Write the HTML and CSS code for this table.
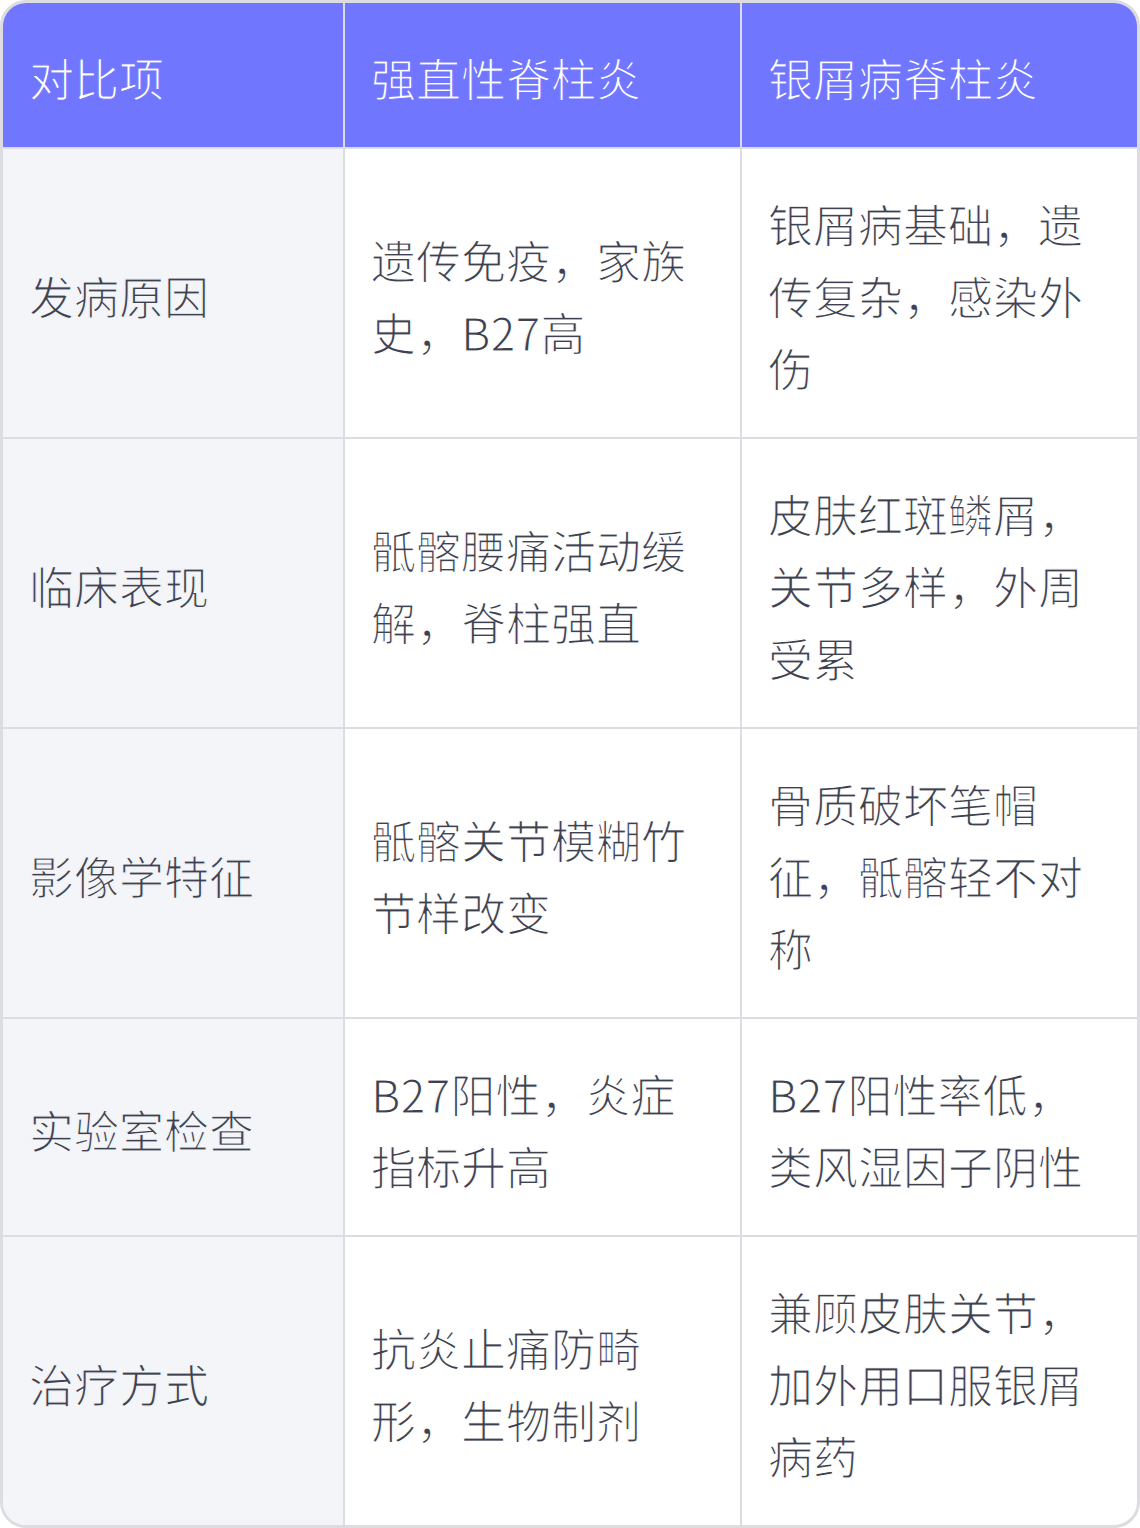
FILE: index.html
```html
<!DOCTYPE html>
<html lang="zh-CN">
<head>
<meta charset="utf-8">
<title>强直性脊柱炎与银屑病脊柱炎对比</title>
<link rel="stylesheet" href="styles.css">
</head>
<body>
<div class="card">
  <table class="cmp">
    <colgroup>
      <col class="c1">
      <col class="c2">
      <col class="c3">
    </colgroup>
    <thead>
      <tr>
        <th>对比项</th>
        <th>强直性脊柱炎</th>
        <th>银屑病脊柱炎</th>
      </tr>
    </thead>
    <tbody>
      <tr>
        <td class="label">发病原因</td>
        <td>遗传免疫，家族史，B27高</td>
        <td>银屑病基础，遗传复杂，感染外伤</td>
      </tr>
      <tr>
        <td class="label">临床表现</td>
        <td>骶髂腰痛活动缓解，脊柱强直</td>
        <td>皮肤红斑鳞屑，关节多样，外周受累</td>
      </tr>
      <tr>
        <td class="label">影像学特征</td>
        <td>骶髂关节模糊竹节样改变</td>
        <td>骨质破坏笔帽征，骶髂轻不对称</td>
      </tr>
      <tr>
        <td class="label">实验室检查</td>
        <td>B27阳性，炎症指标升高</td>
        <td>B27阳性率低，类风湿因子阴性</td>
      </tr>
      <tr>
        <td class="label">治疗方式</td>
        <td>抗炎止痛防畸形，生物制剂</td>
        <td>兼顾皮肤关节，加外用口服银屑病药</td>
      </tr>
    </tbody>
  </table>
</div>
</body>
</html>
```

FILE: styles.css
```css
html, body {
  margin: 0;
  padding: 0;
  background: #ffffff;
}

.card {
  width: 1140px;
  height: 1528px;
  box-sizing: border-box;
  border: 3px solid #dcdce1;
  border-radius: 26px;
  overflow: hidden;
  background: #ffffff;
}

.cmp {
  width: 1134px;
  border-collapse: separate;
  border-spacing: 0;
  table-layout: fixed;
  font-family: "Noto Sans CJK SC", "Noto Sans", sans-serif;
  font-size: 45px;
  font-weight: 400;
  line-height: 72px;
  color: #3e4250;
}

.c1 { width: 342px; }
.c2 { width: 397px; }
.c3 { width: 395px; }

.cmp th,
.cmp td {
  padding: 39px 28px 33px 26px;
  text-align: left;
  vertical-align: middle;
  border-right: 2px solid #dcdde2;
  border-bottom: 2px solid #dcdde2;
  word-break: break-all;
  -webkit-text-stroke: 1.2px #ffffff;
}

.cmp th:last-child,
.cmp td:last-child {
  border-right: none;
}

.cmp tbody tr:last-child td {
  border-bottom: none;
}

.cmp th {
  background: #7176ff;
  color: #ffffff;
  font-weight: 400;
  -webkit-text-stroke: 1.2px #7176ff;
}

.cmp td.label {
  background: #f4f5f9;
  -webkit-text-stroke: 1.2px #f4f5f9;
}
```
